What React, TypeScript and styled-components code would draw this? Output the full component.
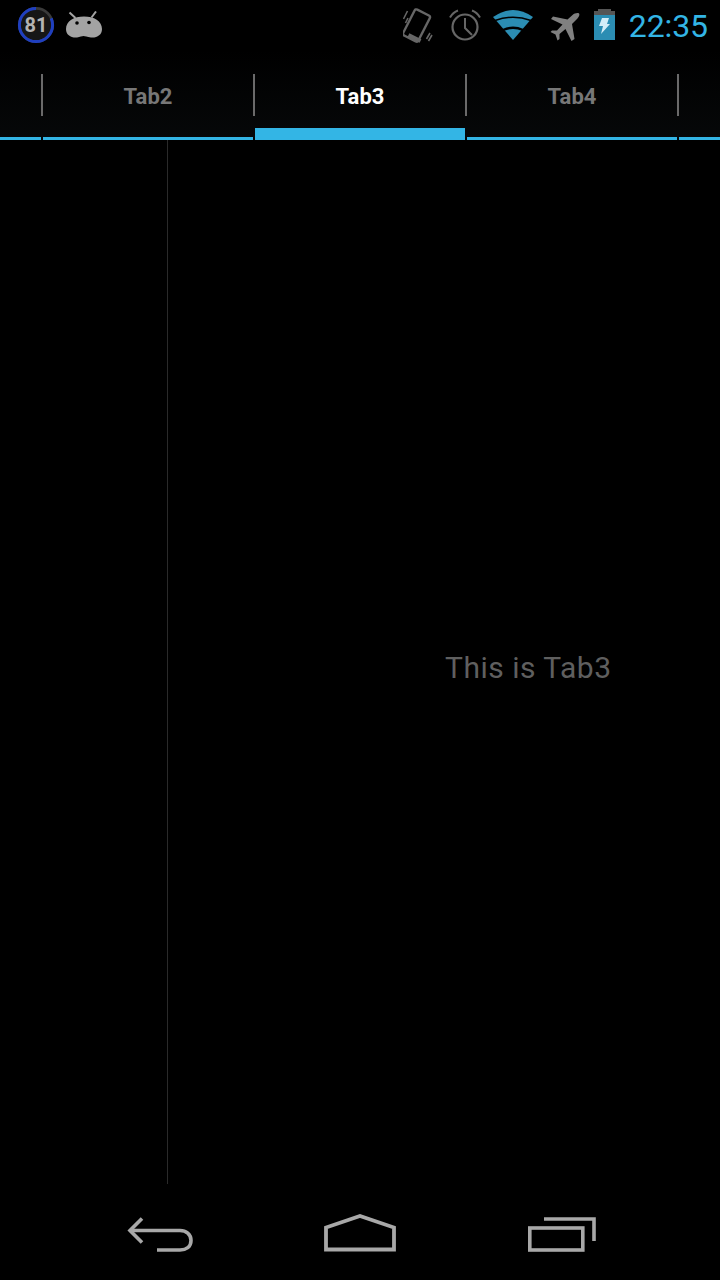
import React from 'react'
import styled, { createGlobalStyle } from 'styled-components'

const GlobalStyle = createGlobalStyle`
  html, body {
    margin: 0;
    padding: 0;
    background: #000;
  }
`

const Screen = styled.div`
  width: 720px;
  height: 1280px;
  display: flex;
  flex-direction: column;
  overflow: hidden;
  background: #000;
  font-family: Roboto, 'Liberation Sans', sans-serif;
`

const StatusBar = styled.div`
  height: 50px;
  flex: none;
  display: flex;
  align-items: flex-start;
  justify-content: space-between;
  background: #000;
`

const StatusGroup = styled.div`
  display: flex;
  align-items: flex-start;
`

const Clock = styled.span`
  margin: 8px 12px 0 14px;
  font-size: 32px;
  line-height: 36px;
  letter-spacing: -0.1px;
  color: #33b5e5;
`

const Icon = styled.svg<{ $left: number; $top: number }>`
  display: block;
  flex: none;
  margin-left: ${({ $left }) => $left}px;
  margin-top: ${({ $top }) => $top}px;
`

const TabStrip = styled.div`
  height: 90px;
  flex: none;
  display: flex;
  background: linear-gradient(#000000, #060809);
`

const TabTrack = styled.div`
  display: flex;
  margin-left: -170px;
`

const Tab = styled.div<{ $active?: boolean }>`
  width: 212px;
  height: 90px;
  flex: none;
  box-sizing: border-box;
  padding-top: 25px;
  text-align: center;
  position: relative;
  font-size: 22px;
  line-height: 44px;
  font-weight: 700;
  letter-spacing: 0.1px;
  color: ${({ $active }) => ($active ? '#ffffff' : '#777777')};

  &::before {
    content: '';
    position: absolute;
    left: 1px;
    right: 1px;
    bottom: 0;
    height: ${({ $active }) => ($active ? '12px' : '3px')};
    background: #33b5e5;
  }

  &::after {
    content: '';
    position: absolute;
    right: -1px;
    top: 24px;
    width: 2px;
    height: 42px;
    background: #6a6a6a;
  }
`

const Content = styled.div`
  flex: 1;
  display: flex;
  background: #000;
`

const Rail = styled.div`
  width: 167px;
  flex: none;
  border-right: 1px solid #2a2a2a;
`

const Pane = styled.div`
  flex: 1;
  display: flex;
  align-items: flex-start;
  padding: 510px 0 0 277px;
`

const PaneText = styled.span`
  font-size: 30px;
  line-height: 36px;
  letter-spacing: 0.5px;
  color: #5f5f5f;
  white-space: nowrap;
`

const NavBar = styled.div`
  height: 96px;
  flex: none;
  display: flex;
  align-items: flex-start;
  background: #000;
`

const BatteryDial = () => (
  <Icon $left={17} $top={6} width="38" height="38" viewBox="0 0 38 38">
    <circle cx="19" cy="19" r="16.6" fill="#161616" stroke="#3a3a3a" strokeWidth="2.6" />
    <circle
      cx="19"
      cy="19"
      r="16.6"
      fill="none"
      stroke="#1f3fbf"
      strokeWidth="3"
      strokeDasharray="84.5 104.3"
      transform="rotate(-90 19 19) scale(1 -1) translate(0 -38)"
    />
    <text
      x="19"
      y="26"
      textAnchor="middle"
      fontFamily="Roboto, sans-serif"
      fontWeight="700"
      fontSize="20"
      fill="#b4b4b4"
    >
      81
    </text>
  </Icon>
)

const AndroidHead = () => (
  <Icon $left={11} $top={11} width="36" height="28" viewBox="0 0 36 28">
    <path d="M3.5 1.5 L9.5 7 M30 0.5 L25.5 6.5" stroke="#a3a3a3" strokeWidth="2" fill="none" />
    <path
      d="M0 18 C0 10 8 5.5 18 5.5 C28 5.5 36 10 36 18 C36 24 31 27 25 26.5 C21 26 19 25 17.5 25 C16 25 14 26 11 26.5 C5 27 0 24 0 18 Z"
      fill="#a3a3a3"
    />
    <circle cx="11" cy="12" r="1.8" fill="#000" />
    <circle cx="23" cy="11.5" r="1.8" fill="#000" />
  </Icon>
)

const VibrateIcon = () => (
  <Icon $left={0} $top={8} width="30" height="36" viewBox="0 0 30 36" fill="none" stroke="#666666">
    <rect x="5" y="3" width="17" height="29" rx="2" strokeWidth="2.4" transform="rotate(27 13.5 17.5)" />
    <path d="M5.5 27 L17.5 33" strokeWidth="4" />
    <path d="M0.5 11 L4.5 3 M2.5 15 L5 10" strokeWidth="1.6" />
    <path d="M23.5 31 L27 25 M25.5 33 L29 27" strokeWidth="1.6" />
  </Icon>
)

const AlarmIcon = () => (
  <Icon $left={16} $top={9} width="32" height="32" viewBox="0 0 32 32" fill="none" stroke="#666666">
    <circle cx="16" cy="18" r="12.5" strokeWidth="2.2" />
    <path d="M16 9 V19 L23 26" strokeWidth="2" />
    <path d="M1 8.5 C3 5 6 2.5 9 1.5 M31 8.5 C29 5 26 2.5 23 1.5" strokeWidth="2" />
  </Icon>
)

const WifiIcon = () => (
  <Icon $left={12} $top={10} width="40" height="30" viewBox="0 0 40 30">
    <path d="M0 7 Q20 -7 40 7 L20 30 Z" fill="#2b8db3" />
    <path d="M2 10.5 Q20 4 38 10.5" fill="none" stroke="#000" strokeWidth="1.5" />
    <path d="M10 20 Q20 15.5 30 20" fill="none" stroke="#000" strokeWidth="2.4" />
  </Icon>
)

const PlaneIcon = () => (
  <Icon $left={17} $top={13} width="30" height="28" viewBox="0 0 30 28">
    <path
      d="M29 0.5 C30 1.5 29 4.5 26 7 L22 11 L24.5 26 L21.5 28 L15.5 16 L9.5 21 L9.5 26 L7.5 27.5 L5.5 21.5 L0.5 19 L2 17.5 L7 17.5 L12.5 11.5 L1 6 L3 3.5 L17.5 6.5 L22 2.5 C24.5 0 28 -0.5 29 0.5 Z"
      fill="#808080"
    />
  </Icon>
)

const BatteryIcon = () => (
  <Icon $left={14} $top={9} width="21" height="31" viewBox="0 0 21 31">
    <rect x="4" y="0" width="13" height="2" fill="#555" />
    <rect x="0" y="2" width="21" height="4" fill="#555" />
    <rect x="0" y="6" width="21" height="25" fill="#2b8db3" />
    <path d="M8 9 H15 L13 15 H16 L7 25 L9 17 H5 Z" fill="#d5edf7" />
  </Icon>
)

const BackIcon = () => (
  <Icon $left={127} $top={33} width="66" height="36" viewBox="0 0 66 36" fill="none" stroke="#a8a8a8" strokeWidth="3.6">
    <path d="M15 1.5 L3 13.5 L15 25.5" />
    <path d="M3 13.5 H53 C59 13.5 64 17 64 23.5 C64 30 59 33 53 33 H30" />
  </Icon>
)

const HomeIcon = () => (
  <Icon $left={131} $top={30} width="72" height="38" viewBox="0 0 72 38" fill="none" stroke="#a8a8a8" strokeWidth="3.8">
    <path d="M2 35.5 V13.5 L36 2 L70 13.5 V35.5 Z" />
  </Icon>
)

const RecentsIcon = () => (
  <Icon $left={132} $top={33} width="68" height="36" viewBox="0 0 68 36" fill="none" stroke="#a8a8a8" strokeWidth="3.6">
    <rect x="1.8" y="11" width="53" height="22" />
    <path d="M16 2 H66 V24" />
  </Icon>
)

const App: React.FC = () => (
  <>
    <GlobalStyle />
    <Screen>
      <StatusBar>
        <StatusGroup>
          <BatteryDial />
          <AndroidHead />
        </StatusGroup>
        <StatusGroup>
          <VibrateIcon />
          <AlarmIcon />
          <WifiIcon />
          <PlaneIcon />
          <BatteryIcon />
          <Clock>22:35</Clock>
        </StatusGroup>
      </StatusBar>
      <TabStrip>
        <TabTrack>
          <Tab />
          <Tab>Tab2</Tab>
          <Tab $active>Tab3</Tab>
          <Tab>Tab4</Tab>
          <Tab />
        </TabTrack>
      </TabStrip>
      <Content>
        <Rail />
        <Pane>
          <PaneText>This is Tab3</PaneText>
        </Pane>
      </Content>
      <NavBar>
        <BackIcon />
        <HomeIcon />
        <RecentsIcon />
      </NavBar>
    </Screen>
  </>
)

export default App
